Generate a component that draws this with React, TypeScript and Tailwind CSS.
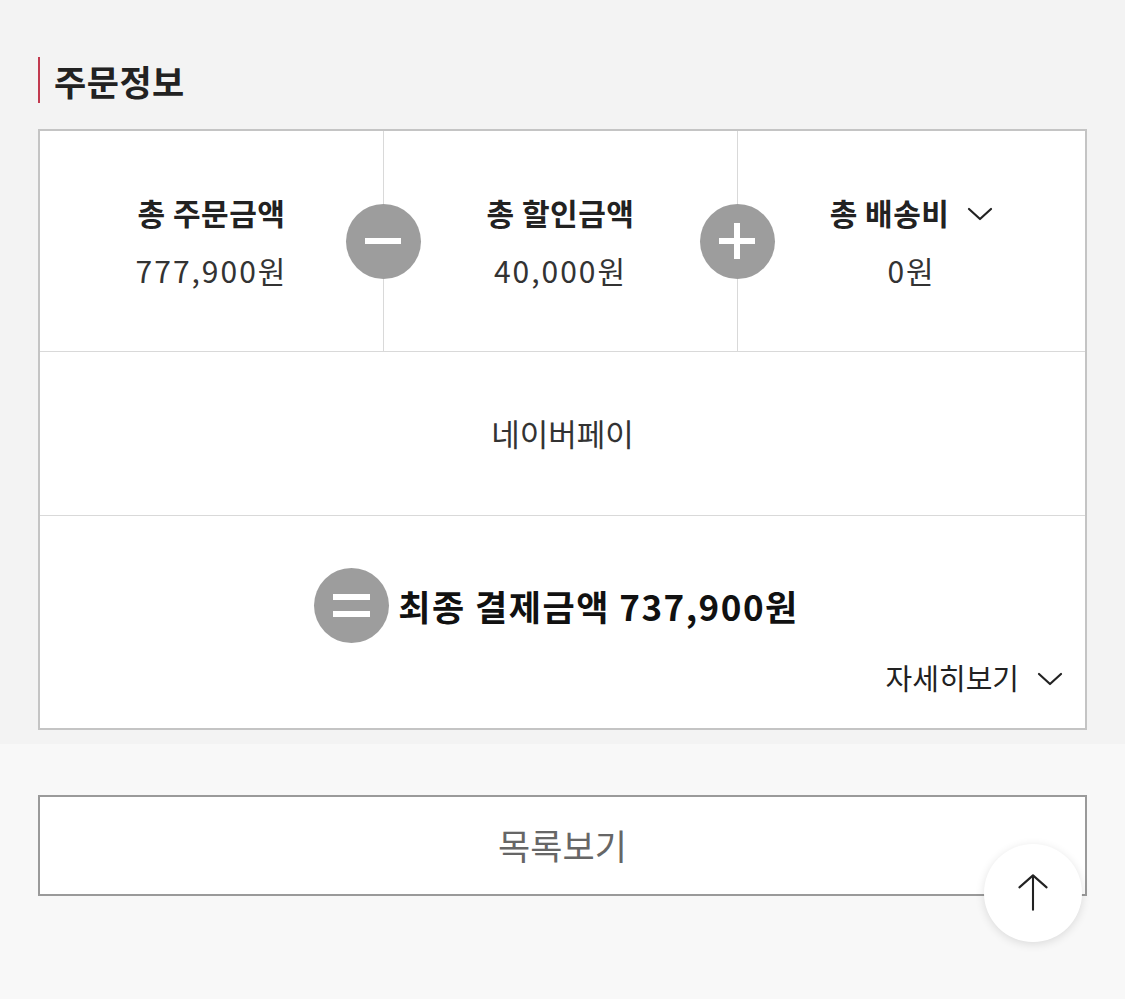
import React from "react";

const FONT = "font-['Noto_Sans_CJK_KR','Noto_Sans',sans-serif]";

const Chevron = ({ className }: { className?: string }) => (
  <svg viewBox="0 0 26 14" className={className} fill="none" stroke="#222" strokeWidth="2.2" strokeLinecap="round" strokeLinejoin="round">
    <path d="M2 2 L13 12 L24 2" />
  </svg>
);

// gray circular operator sign
const OpCircle = ({ op }: { op: "minus" | "plus" | "equals" }) => (
  <div className="w-[75px] h-[75px] rounded-full bg-[#9d9d9d] flex items-center justify-center">
    <svg viewBox="0 0 75 75" className="w-[75px] h-[75px]">
      {op === "minus" && <rect x="19" y="34" width="36" height="6" fill="#fff" />}
      {op === "plus" && (
        <>
          <rect x="19" y="34" width="36" height="6" fill="#fff" />
          <rect x="34" y="19" width="6" height="36" fill="#fff" />
        </>
      )}
      {op === "equals" && (
        <>
          <rect x="19" y="26" width="37" height="6" fill="#fff" />
          <rect x="19" y="43" width="37" height="6" fill="#fff" />
        </>
      )}
    </svg>
  </div>
);

const SumCell = ({ label, value, chevron, className }: { label: string; value: string; chevron?: boolean; className?: string }) => (
  <div className={`flex flex-col items-center justify-center ${className ?? ""}`}>
    <div className="flex items-center leading-[40px] text-[30px] font-bold text-[#222] tracking-[0.5px]">
      {label}
      {chevron && <Chevron className="w-[26px] h-[14px] ml-[18px] mt-[4px]" />}
    </div>
    <div className="mt-[18px] leading-[40px] text-[30px] text-[#333] tracking-[2px]">{value}</div>
  </div>
);

export default function App() {
  return (
    <div className={`${FONT} min-h-[999px] bg-[#f8f8f8]`}>
      <section className="bg-[#f3f3f3] px-[38px] pt-[57px] pb-[14px]">
        <div className="flex items-center h-[46px] border-l-2 border-[#c23a4f] pl-[14px]">
          <h2 className="text-[35px] font-bold text-[#222] leading-none tracking-[0.5px]">주문정보</h2>
        </div>

        <div className="mt-[26px] bg-white border-2 border-[#c4c4c4]">
          {/* totals row */}
          <div className="relative flex h-[221px] border-b border-[#d9d9d9]">
            <SumCell className="w-[343px]" label="총 주문금액" value="777,900원" />
            <div className="w-px bg-[#d9d9d9]" />
            <SumCell className="w-[353px]" label="총 할인금액" value="40,000원" />
            <div className="w-px bg-[#d9d9d9]" />
            <SumCell className="flex-1" label="총 배송비" value="0원" chevron />
            <div className="absolute left-[306px] top-[73px]">
              <OpCircle op="minus" />
            </div>
            <div className="absolute left-[660px] top-[73px]">
              <OpCircle op="plus" />
            </div>
          </div>

          {/* payment method */}
          <div className="h-[164px] flex items-center justify-center border-b border-[#d9d9d9] text-[31px] text-[#333]">
            네이버페이
          </div>

          {/* final amount */}
          <div className="pt-[52px] pb-[33px] pr-[22px]">
            <div className="flex items-center justify-center gap-[9px] pl-[10px]">
              <OpCircle op="equals" />
              <span className="text-[35px] font-bold text-[#111] leading-none tracking-[1.5px]">최종 결제금액 737,900원</span>
            </div>
            <div className="mt-[16px] flex items-center justify-end leading-[36px] text-[29px] text-[#222]">
              자세히보기
              <Chevron className="w-[26px] h-[14px] ml-[18px] mt-[4px]" />
            </div>
          </div>
        </div>
      </section>

      <div className="px-[38px] pt-[51px]">
        <button className="w-full h-[101px] bg-white border-2 border-[#9a9a9a] text-[35px] text-[#666]">
          목록보기
        </button>
      </div>

      <button className="fixed right-[43px] bottom-[57px] w-[98px] h-[98px] rounded-full bg-white shadow-[0_2px_10px_rgba(0,0,0,0.12)] flex items-center justify-center">
        <svg viewBox="0 0 40 50" className="w-[32px] h-[40px]" fill="none" stroke="#222" strokeWidth="2.6" strokeLinecap="round" strokeLinejoin="round">
          <path d="M20 46 V4" />
          <path d="M3 18 L20 3 L37 18" />
        </svg>
      </button>
    </div>
  );
}
